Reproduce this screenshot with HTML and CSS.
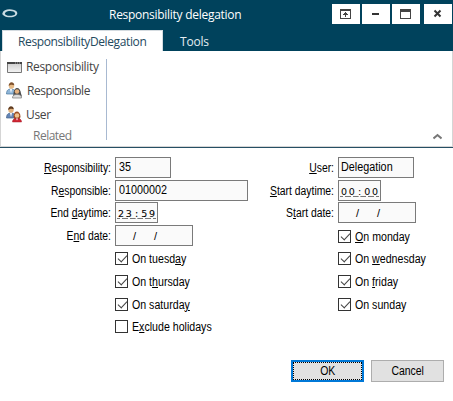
FILE: index.html
```html
<!DOCTYPE html>
<html lang="en">
<head>
<meta charset="utf-8">
<title>Responsibility delegation</title>
<link rel="stylesheet" href="styles.css">
</head>
<body>
<header class="titlebar">
  <svg class="logo" width="18" height="12" viewBox="0 0 18 12"><path fill-rule="evenodd" fill="#c9dbe2" d="M1.500 5C2.500 1.500 8 .5 13 2c3.500 1 4.700 4 1.500 6-3 2-9 1.500-11.500-.3C1.500 7 1 6 1.500 5zm3-.6c-1.500 1.500 0 3 3.500 3.300 3.500.4 7-.7 6-2.700C13.500 2.700 7 2.200 4.500 4.400z"/></svg>
  <h1 class="title">Responsibility delegation</h1>
  <div class="controls">
    <button class="control"><svg width="12" height="11" viewBox="0 0 12 11" shape-rendering="crispEdges"><path fill="#444" d="M0 0h11v10H0zM1 2v7h9V2zM5 3h1v1h1v1h1v1H6v2H5V6H3V5h1V4h1z" fill-rule="evenodd"/></svg></button>
    <button class="control"><svg width="12" height="11" viewBox="0 0 12 11" shape-rendering="crispEdges"><path fill="#333" d="M2 4h7v2H2z"/></svg></button>
    <button class="control"><svg width="12" height="11" viewBox="0 0 12 11" shape-rendering="crispEdges"><path fill="#444" fill-rule="evenodd" d="M0 0h11v10H0zM1 3v6h9V3z"/></svg></button>
    <button class="control close"><svg width="12" height="11" viewBox="0 0 12 11"><path fill="none" stroke="#333" stroke-width="2" d="M2.500 1.500l6 6M8.500 1.500l-6 6"/></svg></button>
  </div>
</header>
<nav class="tabs"><span class="tab active">ResponsibilityDelegation</span><span class="tab tools">Tools</span></nav>
<section class="ribbon">
  <div class="group">
    <div class="command"><svg width="18" height="18" viewBox="0 0 18 18"><defs><linearGradient id="pane" x2="0" y2="1"><stop stop-color="#ccc"/><stop offset="1" stop-color="#f4f4f4"/></linearGradient></defs><path fill="url(#pane)" stroke="#777" d="M1.500 4.500h14v10h-14z"/><path fill="#444" d="M1 4h15v2H1z"/><path stroke="#aaa" stroke-dasharray="1 1" d="M9 5h6"/></svg><span class="responsibility">Responsibility</span></div>
    <div class="command"><svg width="18" height="18" viewBox="0 0 18 18"><path fill="#8fb6d8" stroke="#48779f" stroke-width=".7" d="M.5 12c0-4 2-5 4.500-5s4.500 1 4.500 5z"/><path fill="#fff" d="M4 7h2l-1 4z"/><circle cx="5.500" cy="4" r="2.700" fill="#e7bb87"/><path fill="#80522d" d="M2.700 4c0-5 5.500-4.500 5.600-.8C6.500 3 5 2 2.700 4z"/><path fill="#4c4c4c" d="M7.500 12c0-8 7-8 7.500-.5l1 3H7z"/><circle cx="11" cy="9.500" r="2.200" fill="#e6b17d"/><path fill="#ddd" stroke="#777" stroke-width=".7" d="M6.500 16c0-3 2-3.500 4.500-3.500s4.500.5 4.500 3.500z"/></svg><span class="responsible">Responsible</span></div>
    <div class="command"><svg width="18" height="18" viewBox="0 0 18 18"><path fill="#6385b6" stroke="#49658c" stroke-width=".7" d="M.5 12c0-4 2-5 4.500-5s4.500 1 4.500 5z"/><path fill="#fff" d="M4 7h2l-1 4z"/><circle cx="5" cy="4" r="2.700" fill="#e1b17b"/><path fill="#5f3b20" d="M2.200 4c0-5 5.500-4.500 5.600-.8C6.500 3 5 2 2.200 4z"/><path fill="#9b4b20" d="M7.500 11c0-7.500 7-7 7 0l-1 2h-5z"/><circle cx="11" cy="9.500" r="2.300" fill="#f0c28d"/><path fill="#cf2633" stroke="#a41d29" stroke-width=".5" d="M6.500 16c0-3 2-3.500 4.500-3.500s4.500.5 4.500 3.500z"/><path fill="#fff" d="M10 12.500h2l-1 2z"/></svg><span class="user">User</span></div>
    <div class="caption">Related</div>
  </div>
  <svg class="chevron" width="9" height="7" viewBox="0 0 9 7"><path fill="none" stroke="#777" stroke-width="2" d="M.5 5.500l4-3.500 4 3.500"/></svg>
</section>
<main class="form">
  <div class="column left">
    <label><u>R</u>esponsibility:</label><div class="field w56"><span class="value">35</span></div>
    <label>R<u>e</u>sponsible:</label><div class="field w133"><span class="value">01000002</span></div>
    <label>End <u>d</u>aytime:</label><div class="field time end"><b>2</b><b>3</b><b>:</b><b>5</b><b>9</b></div>
    <label>E<u>n</u>d date:</label><div class="field date"><span>/</span><span>/</span></div>
    <div class="check"><i class="box on"></i><span>On tuesd<u>a</u>y</span></div>
    <div class="check"><i class="box on"></i><span>On t<u>h</u>ursday</span></div>
    <div class="check"><i class="box on"></i><span>On saturda<u>y</u></span></div>
    <div class="check"><i class="box"></i><span>E<u>x</u>clude holidays</span></div>
  </div>
  <div class="column right">
    <label><u>U</u>ser:</label><div class="field w76"><span class="value">Delegation</span></div>
    <label><u>S</u>tart daytime:</label><div class="field time"><b>0</b><b>0</b><b>:</b><b>0</b><b>0</b></div>
    <label>S<u>t</u>art date:</label><div class="field date"><span>/</span><span>/</span></div>
    <div class="check first"><i class="box on"></i><span><u>O</u>n monday</span></div>
    <div class="check"><i class="box on"></i><span>On <u>w</u>ednesday</span></div>
    <div class="check"><i class="box on"></i><span>On <u>f</u>riday</span></div>
    <div class="check"><i class="box on"></i><span>On sunday</span></div>
  </div>
</main>
<footer class="actions"><button class="action ok"><span class="focus"><span class="caption-text">OK</span></span></button><button class="action"><span class="caption-text">Cancel</span></button></footer>
</body>
</html>
```
FILE: styles.css
```css
* { box-sizing: border-box; }
body { margin: 0; width: 453px; height: 401px; overflow: hidden; background: #fff; color: #000; font: 12px "Liberation Sans", sans-serif; }
button { margin: 0; padding: 0; border: 0; font: inherit; }
svg { display: block; flex: none; }
.titlebar { display: flex; height: 30px; background: #00425c; color: #fff; }
.logo { margin: 8px 0 0 1px; }
.title { width: 223px; margin: 0 0 0 90px; padding-top: 5px; font: 12px/20px "Open Sans", sans-serif; white-space: nowrap; letter-spacing: -.28px; }
.controls { display: flex; gap: 2px; padding-top: 4px; }
.control { display: flex; width: 28px; height: 20px; padding: 5px 0 0 8px; background: #fff; }
.control.close { margin-left: 2px; }
.tabs { display: flex; height: 21px; padding-left: 2px; background: #00425c; font: 12px/24px "Open Sans", sans-serif; }
.tab { color: #e4edf1; letter-spacing: -.2px; }
.active { width: 161px; padding-left: 15px; background: #fff; color: #23495e; border: solid #d4dbe0; border-width: 1px 1px 0; line-height: 22px; letter-spacing: -.38px; }
.tools { padding-left: 17px; }
.ribbon { display: flex; justify-content: space-between; height: 97px; padding: 3px 11px 0 6px; border-bottom: 1px solid #264f64; box-shadow: inset 1px 0 #d5d5d5, inset -1px 0 #d5d5d5, inset 0 -1px #d5d5d5; }
.group { width: 101px; height: 81px; margin-top: 5px; border-right: 1px solid #a8b9d1; font: 12px/24px "Open Sans", sans-serif; color: #444; letter-spacing: -.33px; }
.command { display: flex; height: 24px; align-items: center; white-space: nowrap; }
.command:first-child { margin-top: -4px; }
.command span { margin-left: 2px; }
.command .responsible { margin-left: 3px; }
.group .responsible { letter-spacing: -.42px; }
.group .caption { height: 20px; padding-left: 27px; line-height: 18px; color: #777; letter-spacing: -.5px; }
.chevron { margin-top: 79px; }
.form { display: grid; grid-template-columns: 223px 230px; height: 212px; padding-top: 9px; }
.column { display: grid; grid-template-columns: 111px 133px; grid-template-rows: 23px 22px 23px 23px 23px 23px 22px 21px; column-gap: 4px; }
.column label { text-align: right; line-height: 22px; white-space: nowrap; transform: scaleX(.865); transform-origin: right; }
.field { display: flex; height: 21px; padding-left: 3px; border: 1px solid #7a7a7a; background: #fafafa; line-height: 19px; white-space: pre; }
.value { display: block; transform: scaleX(.9); transform-origin: left; }
.w56 { width: 56px; }
.w76 { width: 76px; padding-left: 2px; }
.w133 { width: 133px; }
.time { width: 43px; padding: 6px 0 0 1px; font: 9.5px/9px "DejaVu Sans", sans-serif; }
.time b { width: 7.8px; height: 10px; text-align: center; font-weight: 400; border-bottom: 1px dashed #777; }
.time.end { -webkit-text-stroke: .1px #000; }
.date { width: 78px; padding-left: 17px; line-height: 20px; gap: 18px; font-size: 11px; }
.check { grid-column: 2; display: flex; height: 21px; padding-top: 4px; line-height: 14px; white-space: nowrap; }
.check.first { padding-top: 5px; }
.check span { margin-left: 3.5px; transform: scaleX(.885); transform-origin: left; }
.box { width: 13px; height: 13px; border: 1px solid #333; }
.on::after { content: ""; display: block; width: 4px; height: 8px; margin: 0 0 0 4px; border: solid #444; border-width: 0 1.5px 1.5px 0; transform: rotate(43deg); }
.actions { display: flex; gap: 7px; padding-left: 291px; }
.action { width: 73px; height: 22px; background: #e1e1e1; border: 1px solid #adadad; line-height: 20px; color: #000; }
.ok { border: 2px solid #0078d7; line-height: 16px; }
.focus { display: block; height: 18px; border: 1px dotted #000; }
.caption-text { display: inline-block; transform: scaleX(.87); }
u { text-underline-offset: 1px; text-decoration-thickness: 1px; }
```
